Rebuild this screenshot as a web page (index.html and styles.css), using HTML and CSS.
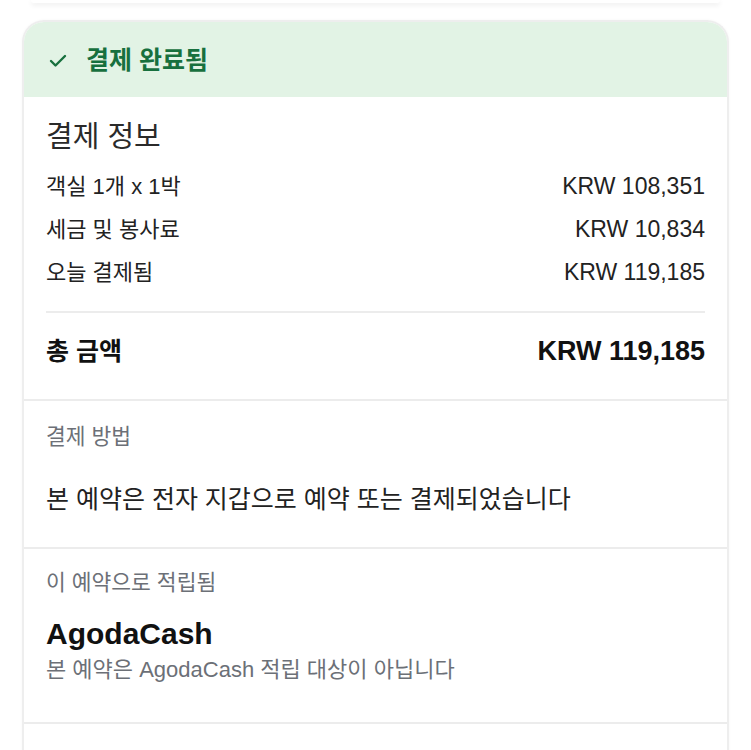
FILE: index.html
```html
<!DOCTYPE html>
<html lang="ko">
<head>
<meta charset="utf-8">
<link rel="stylesheet" href="styles.css">
</head>
<body>
<div class="prev-card"></div>
<div class="card">
  <div class="status">
    <svg class="check" width="18" height="15" viewBox="0 0 18 15"><path d="M2 8 L6.5 12.5 L16 3" fill="none" stroke="#17703e" stroke-width="2.4" stroke-linecap="round" stroke-linejoin="round"/></svg>
    <span class="status-text">결제 완료됨</span>
  </div>
  <div class="section info">
    <div class="title">결제 정보</div>
    <div class="rows">
      <div class="row"><span>객실 1개 x 1박</span><span class="amount">KRW 108,351</span></div>
      <div class="row"><span>세금 및 봉사료</span><span class="amount">KRW 10,834</span></div>
      <div class="row"><span>오늘 결제됨</span><span class="amount">KRW 119,185</span></div>
    </div>
    <div class="total"><span>총 금액</span><span class="total-amount">KRW 119,185</span></div>
  </div>
  <div class="section method">
    <div class="label">결제 방법</div>
    <div class="desc">본 예약은 전자 지갑으로 예약 또는 결제되었습니다</div>
  </div>
  <div class="section earn">
    <div class="label">이 예약으로 적립됨</div>
    <div class="cash">AgodaCash</div>
    <div class="note">본 예약은 AgodaCash 적립 대상이 아닙니다</div>
  </div>
  <div class="section rest"></div>
</div>
</body>
</html>
```
FILE: styles.css
```css
html, body {
  margin: 0;
  padding: 0;
  background: #ffffff;
}
body {
  font-family: "Liberation Sans", "Noto Sans CJK KR", sans-serif;
  color: #222222;
  overflow: hidden;
  height: 750px;
}
.prev-card {
  height: 3px;
  margin: 0 31px;
  background: #fff;
  border-radius: 0 0 12px 12px;
  box-shadow: 0 2px 5px rgba(0, 0, 0, 0.09);
}
.card {
  margin: 17px 22px 0;
  border: 2px solid #eeeeee;
  border-bottom: none;
  border-radius: 22px 22px 0 0;
  overflow: hidden;
  box-shadow: 0 0 3px rgba(0, 0, 0, 0.04);
}
.status {
  height: 75px;
  background: #e2f3e5;
  display: flex;
  align-items: center;
  padding: 0 0 0 25px;
  gap: 19px;
  box-sizing: border-box;
}
.check {
  display: block;
  margin-top: 1px;
}
.status-text {
  font-size: 25px;
  font-weight: bold;
  color: #17703e;
  line-height: 30px;
}
.section {
  padding: 0 22px;
  border-bottom: 2px solid #ececec;
}
.info {
  padding-top: 22px;
  padding-bottom: 28px;
}
.title {
  font-size: 29px;
  line-height: 36px;
  color: #2a2a2a;
}
.rows {
  margin-top: 10px;
  padding-bottom: 17px;
  border-bottom: 2px solid #ececec;
}
.row {
  display: flex;
  justify-content: space-between;
  align-items: baseline;
  font-size: 22px;
  line-height: 42px;
}
.amount {
  font-size: 23px;
}
.total {
  display: flex;
  justify-content: space-between;
  align-items: baseline;
  margin-top: 18px;
  font-size: 25px;
  line-height: 40px;
  font-weight: bold;
  color: #111;
}
.total-amount {
  font-size: 27px;
}
.method {
  padding-top: 23px;
  padding-bottom: 33px;
}
.label {
  font-size: 21.5px;
  line-height: 26px;
  color: #6c7077;
}
.desc {
  margin-top: 34px;
  font-size: 25px;
  line-height: 30px;
}
.earn {
  padding-top: 21px;
  padding-bottom: 38px;
}
.cash {
  margin-top: 20px;
  font-size: 30px;
  line-height: 36px;
  font-weight: bold;
  color: #111;
}
.note {
  margin-top: 4px;
  font-size: 22px;
  line-height: 28px;
  color: #6c7077;
}
.rest {
  height: 60px;
  border-bottom: none;
}
```
